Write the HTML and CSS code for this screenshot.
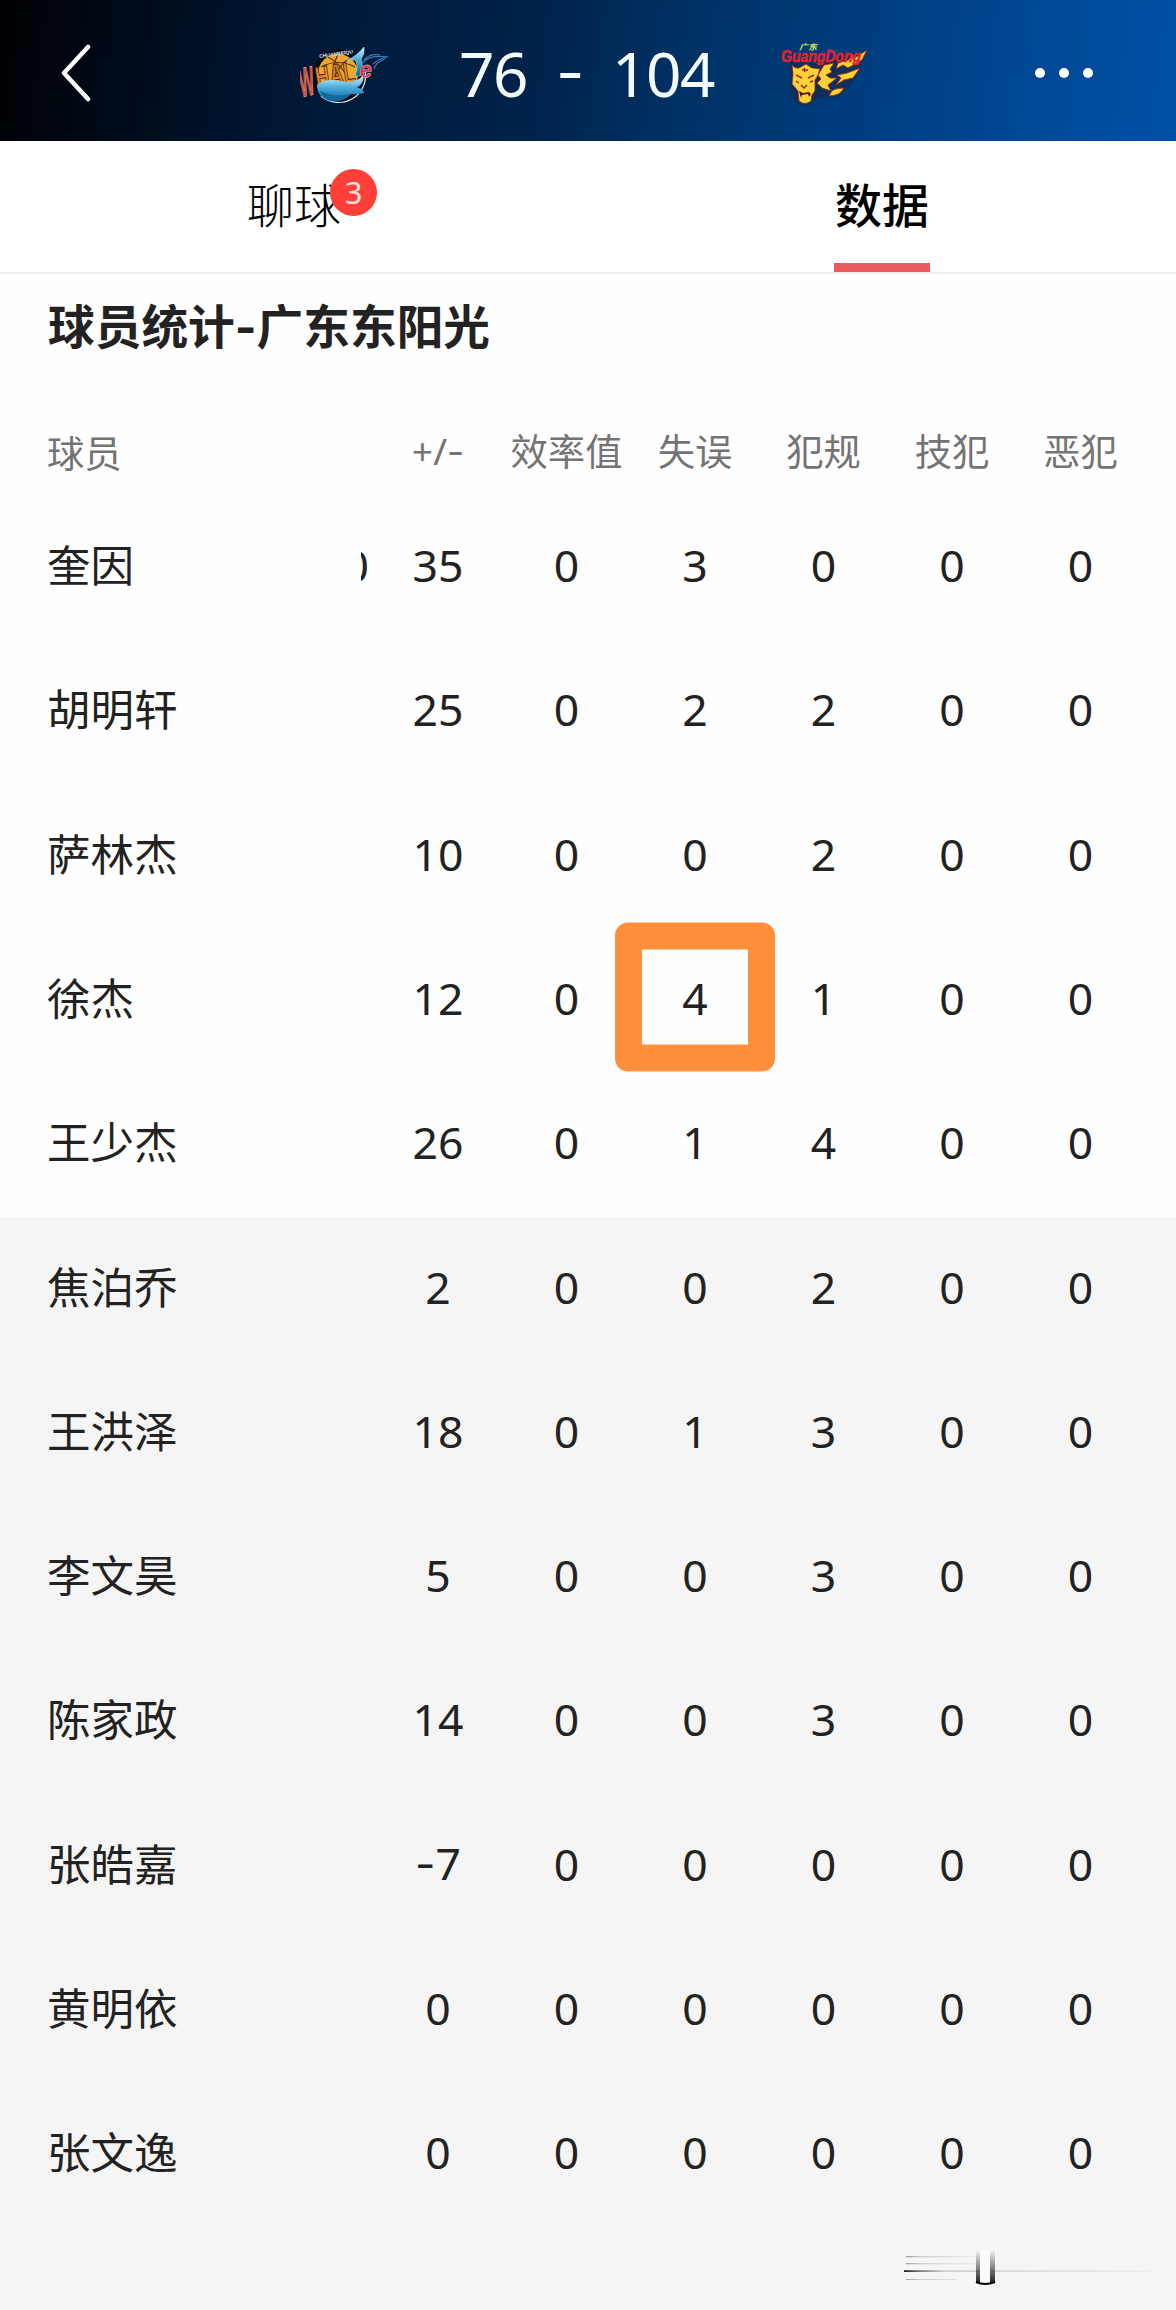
FILE: index.html
```
<!doctype html>
<html lang="zh-CN">
<head>
<meta charset="utf-8">
<link rel="stylesheet" href="styles.css">
<title>球员统计</title>
</head>

<body>

<div class="header">
	<svg class="back" viewBox="0 0 32 58"><path d="M28 3 L4 29 L28 55"/></svg>
	<svg class="logo logo-whale" viewBox="0 0 94 66">
		<defs>
			<linearGradient id="whale" x1="0" y1="0" x2="0" y2="1">
				<stop offset="0" stop-color="#d5f1fa"/>
				<stop offset=".4" stop-color="#51b5de"/>
				<stop offset="1" stop-color="#0b5f9f"/>
			</linearGradient>
		</defs>
		<circle cx="39" cy="36" r="27" fill="#050d19"/>
		<path d="M65 30 A27 27 0 0 1 21 56" fill="none" stroke="#dce8ee" stroke-width="1.2"/>
		<circle cx="38" cy="34" r="20" fill="#eda52c"/>
		<path d="M21 27 Q38 18 55 27 M38 14 Q31 28 34 45 M28 17 Q42 24 50 42 M50 18 Q38 25 33 42" fill="none" stroke="#55310e" stroke-width="1.2"/>
		<text x="19" y="16" class="whale-top" transform="rotate(-8 34 14)">CHUANBEIQU</text>
		<path d="M47 20 Q56 17 64 7 Q65 14 61 19 Q64 26 60 36 L55 36 Q59 25 55 20 Z" fill="url(#whale)" stroke="#b8e5f3" stroke-width=".6"/>
		<text x="0" y="0" class="whale-u" transform="translate(2 57) rotate(-12)" textLength="15" lengthAdjust="spacingAndGlyphs">W</text>
		<text x="0" y="0" class="whale-txt" transform="translate(17 48) rotate(-9)" textLength="40" lengthAdjust="spacingAndGlyphs">HAL</text>
		<text x="0" y="0" class="whale-e" transform="translate(60 38) rotate(-6)">e</text>
		<path d="M17 45 Q25 38 40 41 Q54 44 63 36 Q65 42 57 48 Q63 48 64 53 Q57 55 51 54 Q42 63 30 61 Q17 57 17 45 Z" fill="url(#whale)"/>
		<path d="M20 51 Q36 58 51 54 Q41 62 30 60 Q22 57 20 51 Z" fill="#12679d"/>
		<path d="M62 24 Q68 14 88 17 Q80 18 73 24 M64 20 Q70 13 80 15 M74 29 Q76 22 85 19" fill="none" stroke="#337cb8" stroke-width="1.2"/>
	</svg>
	<div class="score"><span>76</span><span class="dash">-</span><span>104</span></div>
	<svg class="logo logo-tiger" viewBox="0 0 94 72">
		<path d="M12 24 L42 24 L72 17 L90 14 L82 30 L74 47 L60 60 L38 61 L28 69 L16 66 L12 50 Z" fill="#182743" opacity=".55"/>
		<text x="21" y="13" class="tiger-cn" textLength="18" lengthAdjust="spacingAndGlyphs">广东</text>
		<g fill="#fdd335" stroke="#9b2515" stroke-width=".9" stroke-linejoin="round">
			<path d="M14 28 Q17 32 21 31 L28 27 L34 31 Q38 31 42 32 Q40 40 37 43 L37 54 L34 58 L33 64 Q27 69 21 64 L20 54 L14 47 L15 37 Z"/>
			<path d="M46 28 L56 26 L52 32 L54 35 L48 38 L52 41 L59 41 L50 48 L53 54 L44 51 L39 46 L43 42 L40 38 Z"/>
			<path d="M60 26 L70 23 L75 17 L75 22 L89 13 L84 23 L70 31 L65 28 L58 32 Z"/>
			<path d="M59 38 L69 36 L82 31 L75 41 L66 43 L58 48 L63 41 Z"/>
			<path d="M53 55 Q56 51 66 51 Q62 59 51 59 Z"/>
		</g>
		<path d="M18 38 L24 41 M36 38 L30 41 M26 31 L27 35 M24 33 L30 33 M18 44 L21 46 M32 45 L35 44 M23 48 L26 51 L29 48" fill="none" stroke="#a42218" stroke-width="1.5"/>
		<path d="M21 54 L25 56 L31 55 L33 57 L31 60 L30 57 L24 58 L23 61 Z" fill="#54150e"/>
		<text x="3" y="25" class="tiger-en" textLength="80" lengthAdjust="spacingAndGlyphs">GuangDong</text>
	</svg>
	<svg class="more" viewBox="0 0 60 12"><circle cx="6" cy="6" r="5"/><circle cx="30" cy="6" r="5"/><circle cx="54" cy="6" r="5"/></svg>
</div>

<div class="tabs">
	<div class="tab"><span class="tab-text">聊球<i class="badge">3</i></span></div>
	<div class="tab active"><span class="tab-text">数据</span></div>
</div>

<h1 class="title">球员统计<span class="dash">-</span>广东东阳光</h1>

<table class="stats">
	<colgroup>
		<col class="c-name"><col class="c-cut">
		<col class="c-a"><col class="c-b"><col class="c-a"><col class="c-b"><col class="c-a"><col class="c-b"><col>
	</colgroup>
	<thead>
		<tr><th class="name">球员</th><th></th><th>+/<span class="dash">-</span></th><th>效率值</th><th>失误</th><th>犯规</th><th>技犯</th><th>恶犯</th><th></th></tr>
	</thead>
	<tbody class="starter">
		<tr><td class="name">奎因</td><td><div class="cut">0</div></td><td>35</td><td>0</td><td>3</td><td>0</td><td>0</td><td>0</td><td></td></tr>
		<tr><td class="name">胡明轩</td><td></td><td>25</td><td>0</td><td>2</td><td>2</td><td>0</td><td>0</td><td></td></tr>
		<tr><td class="name">萨林杰</td><td></td><td>10</td><td>0</td><td>0</td><td>2</td><td>0</td><td>0</td><td></td></tr>
		<tr><td class="name">徐杰</td><td></td><td>12</td><td>0</td><td><span class="mark">4</span></td><td>1</td><td>0</td><td>0</td><td></td></tr>
		<tr><td class="name">王少杰</td><td></td><td>26</td><td>0</td><td>1</td><td>4</td><td>0</td><td>0</td><td></td></tr>
	</tbody>
	<tbody class="bench">
		<tr><td class="name">焦泊乔</td><td></td><td>2</td><td>0</td><td>0</td><td>2</td><td>0</td><td>0</td><td></td></tr>
		<tr><td class="name">王洪泽</td><td></td><td>18</td><td>0</td><td>1</td><td>3</td><td>0</td><td>0</td><td></td></tr>
		<tr><td class="name">李文昊</td><td></td><td>5</td><td>0</td><td>0</td><td>3</td><td>0</td><td>0</td><td></td></tr>
		<tr><td class="name">陈家政</td><td></td><td>14</td><td>0</td><td>0</td><td>3</td><td>0</td><td>0</td><td></td></tr>
		<tr><td class="name">张皓嘉</td><td></td><td><span class="dash">-</span>7</td><td>0</td><td>0</td><td>0</td><td>0</td><td>0</td><td></td></tr>
		<tr><td class="name">黄明依</td><td></td><td>0</td><td>0</td><td>0</td><td>0</td><td>0</td><td>0</td><td></td></tr>
		<tr><td class="name">张文逸</td><td></td><td>0</td><td>0</td><td>0</td><td>0</td><td>0</td><td>0</td><td></td></tr>
	</tbody>
</table>

<div class="footer">
	<svg class="trace" viewBox="0 0 260 50">
		<defs>
			<linearGradient id="fadeX" gradientUnits="userSpaceOnUse" x1="0" y1="0" x2="250" y2="0">
				<stop offset="0" stop-color="#000"/>
				<stop offset=".06" stop-color="#666"/>
				<stop offset=".16" stop-color="#ccc"/>
				<stop offset="1" stop-color="#eee"/>
			</linearGradient>
			<linearGradient id="fadeY" x1="0" y1="0" x2="0" y2="1">
				<stop offset="0" stop-color="#222" stop-opacity="0"/>
				<stop offset="1" stop-color="#222"/>
			</linearGradient>
			<linearGradient id="faint" gradientUnits="userSpaceOnUse" x1="0" y1="0" x2="80" y2="0">
				<stop offset="0" stop-color="#999"/>
				<stop offset=".2" stop-color="#ccc"/>
				<stop offset="1" stop-color="#f4f4f4"/>
			</linearGradient>
		</defs>
		<rect x="2" y="11" width="70" height="1.3" fill="url(#faint)"/>
		<rect x="2" y="18" width="70" height="1.3" fill="url(#faint)"/>
		<rect x="2" y="34" width="50" height="1" fill="url(#faint)"/>
		<rect x="0" y="25.3" width="246" height="1.6" fill="url(#fadeX)"/>
		<rect x="76" y="5" width="10" height="34" fill="#fafafa"/>
		<rect x="72" y="5" width="4" height="33" fill="url(#fadeY)"/>
		<rect x="86" y="5" width="5" height="33" fill="url(#fadeY)"/>
		<path d="M72 37 Q81 41 91 37" fill="none" stroke="#000" stroke-width="2"/>
	</svg>
</div>

</body>
</html>
```
FILE: styles.css
```
*
{
	margin:0;
	padding:0;
	box-sizing:border-box;
}
body
{
	width:1176px;
	height:2310px;
	overflow:hidden;
	display:flex;
	flex-direction:column;
	background-color:#fefefe;
	color:#222;
	font-family:"Noto Sans","Noto Sans CJK SC",sans-serif;
}
.dash
{
	font-family:Inter,sans-serif;
}

/* 顶部比分 */
.header
{
	height:141px;
	flex:none;
	display:flex;
	align-items:center;
	padding:5px 82px 0 60px;
	background:linear-gradient(98deg,#000003 0%,#000e21 15%,#001a3a 29%,#002249 45%,#003369 60%,#004086 77%,#0051a8 100%);
	color:#f4fbff;
}
.back
{
	width:32px;
	height:58px;
	fill:none;
	stroke:#fff;
	stroke-width:4.5;
	stroke-linecap:round;
	stroke-linejoin:round;
}
.logo
{
	flex:none;
}
.logo-whale
{
	width:94px;
	height:66px;
	margin-left:208px;
}
.logo-tiger
{
	width:94px;
	height:72px;
	margin-left:62px;
	overflow:visible;
}
.score
{
	width:257px;
	margin-left:65px;
	padding-right:2px;
	display:flex;
	justify-content:space-between;
	align-items:center;
	font-size:62px;
	line-height:80px;
	letter-spacing:-1.5px;
}
.more
{
	width:60px;
	height:12px;
	margin-left:auto;
	fill:#fff;
}
.whale-top
{
	font:bold 5px "Liberation Sans",sans-serif;
	fill:#dfe8ee;
}
.whale-u
{
	font:bold italic 41px "Liberation Sans",sans-serif;
	fill:#d84b3a;
	stroke:#e9b9a0;
	stroke-width:.7;
}
.whale-txt
{
	font:bold 30px "Liberation Sans",sans-serif;
	fill:#e9852b;
	stroke:#3c1c14;
	stroke-width:1;
}
.whale-e
{
	font:bold italic 23px "Liberation Sans",sans-serif;
	fill:#d6304b;
	stroke:#dda9bd;
	stroke-width:.6;
}
.tiger-cn
{
	font:italic bold 8px "Noto Sans CJK SC",sans-serif;
	fill:#d9e84e;
}
.tiger-en
{
	font:italic bold 16px "Liberation Sans",sans-serif;
	fill:#e02231;
	stroke:#e02231;
	stroke-width:.6;
}

/* 标签栏 */
.tabs
{
	height:133px;
	flex:none;
	display:flex;
	border-bottom:2px #f1f1f1 solid;
	background-color:#fff;
}
.tab
{
	flex:1;
	display:flex;
	justify-content:center;
	color:#000;
	font-family:"Noto Sans CJK SC",sans-serif;
	font-size:47px;
	font-weight:300;
	line-height:123px;
}
.tab-text
{
	position:relative;
	height:131px;
}
.active .tab-text
{
	width:96px;
	text-align:center;
	font-weight:500;
	border-bottom:9px #ec5b60 solid;
}
.badge
{
	position:absolute;
	left:83px;
	top:28px;
	width:47px;
	height:47px;
	border-radius:50%;
	background-color:#ff3f38;
	color:#ffe3dc;
	font:400 31px/47px "Noto Sans",sans-serif;
	text-align:center;
}

/* 球员数据 */
.title
{
	flex:none;
	height:120px;
	padding-left:48px;
	font:bold 46.7px/99px "Noto Sans CJK SC",sans-serif;
}
.stats
{
	flex:none;
	width:1176px;
	table-layout:fixed;
	border-collapse:collapse;
	text-align:center;
}
.c-name
{
	width:361px;
}
.c-cut
{
	width:13px;
}
.c-a
{
	width:128px;
}
.c-b
{
	width:129px;
}
.stats th
{
	height:101.4px;
	padding-top:14px;
	color:#747474;
	font-size:37.3px;
	font-weight:normal;
	line-height:50px;
	white-space:nowrap;
}
.stats td
{
	height:144.3px;
	padding-bottom:5px;
	font-size:44.5px;
	line-height:60px;
}
.stats .name
{
	padding-left:47px;
	text-align:left;
	font-family:"Noto Sans CJK SC",sans-serif;
}
.stats td.name
{
	padding-bottom:7px;
	font-size:43.5px;
}
.cut
{
	width:8px;
	display:flex;
	justify-content:flex-end;
	overflow:hidden;
}
.mark
{
	position:relative;
}
/* 失误最多的框 */
.mark::after
{
	content:"";
	position:absolute;
	left:50%;
	top:50%;
	width:160px;
	height:149px;
	box-sizing:border-box;
	transform:translate(-50%,-50%);
	border:27px #ff8f3b solid;
	border-radius:13px;
}
.bench,.footer
{
	background-color:#f5f5f5;
}
.footer
{
	flex:1;
	padding:18px 0 0 904px;
}
.trace
{
	display:block;
	width:260px;
	height:50px;
}
```
